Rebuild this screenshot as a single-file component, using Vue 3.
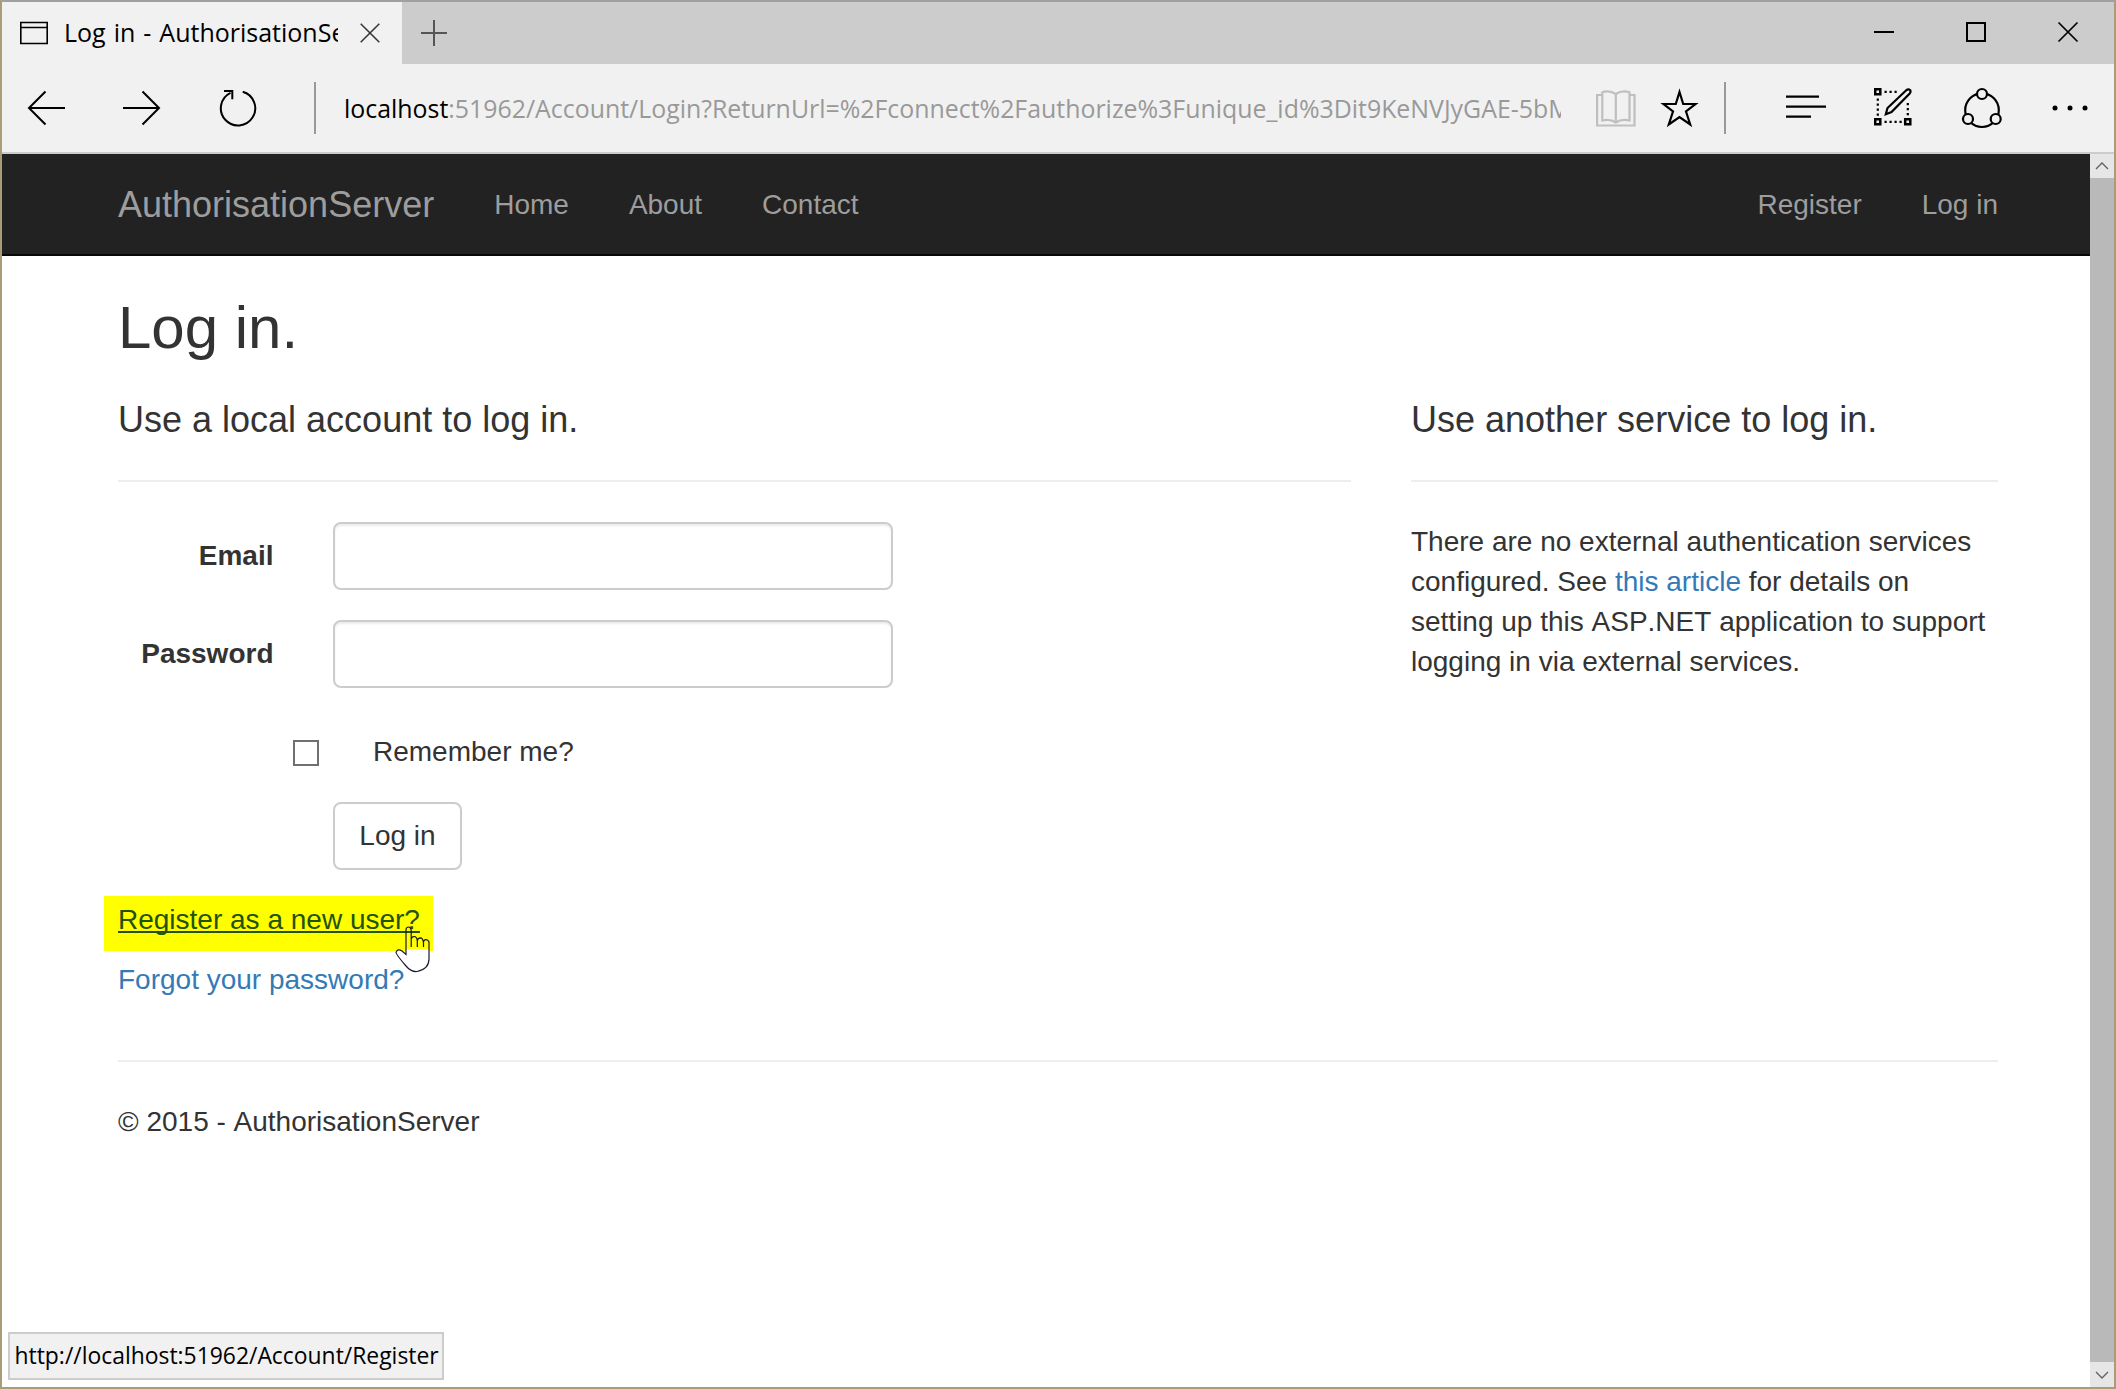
<script setup>
const navLinks = ['Home', 'About', 'Contact']
const accountLinks = ['Register', 'Log in']
const fields = [
  { id: 'email', label: 'Email', type: 'email' },
  { id: 'password', label: 'Password', type: 'password' },
]
</script>

<template>
  <div class="window">
    <header class="tabbar">
      <div class="tab">
        <svg class="page-icon" width="28" height="24" viewBox="0 0 28 24" fill="none" stroke="#000" stroke-width="1.6">
          <path d="M.8 1.5H27.2V22.5H.8ZM.8 6.500H27.2" />
        </svg>
        <span class="tab-title">Log in - AuthorisationServer</span>
        <svg class="tab-close" width="20" height="20" viewBox="0 0 20 20" fill="none" stroke="#333" stroke-width="1.5">
          <path d="M.7 .7 19.3 19.3M19.3 .7.7 19.3" />
        </svg>
      </div>
      <svg class="new-tab" width="26" height="26" viewBox="0 0 26 26" fill="none" stroke="#555" stroke-width="2">
        <path d="M13 0V26M0 13H26" />
      </svg>
      <div class="caption">
        <svg width="92" height="62" viewBox="0 0 92 62" fill="none" stroke="#000" stroke-width="2">
          <path d="M36 30H56" />
        </svg>
        <svg width="92" height="62" viewBox="0 0 92 62" fill="none" stroke="#000" stroke-width="2">
          <path d="M37 21H55V39H37Z" />
        </svg>
        <svg width="92" height="62" viewBox="0 0 92 62" fill="none" stroke="#000" stroke-width="1.7">
          <path d="M36.500 20.500 55.500 39.500M55.500 20.500 36.500 39.500" />
        </svg>
      </div>
    </header>

    <div class="toolbar">
      <svg class="back" width="40" height="40" viewBox="0 0 40 40" fill="none" stroke="#000" stroke-width="2">
        <path d="M38 20H2M18.500 3.500 2 20 18.500 36.500" />
      </svg>
      <svg class="forward" width="40" height="40" viewBox="0 0 40 40" fill="none" stroke="#000" stroke-width="2">
        <path d="M1 20H37M20.500 3.500 37 20 20.500 36.500" />
      </svg>
      <svg class="reload" width="40" height="40" viewBox="0 0 40 40" fill="none" stroke="#000" stroke-width="2">
        <path d="M24.700 3.700A17.200 17.200 0 1 1 12.500 4.800M6 3H14.300V11.200" />
      </svg>
      <i class="divider"></i>
      <div class="address"><b>localhost</b>:51962/Account/Login?ReturnUrl=%2Fconnect%2Fauthorize%3Funique_id%3Dit9KeNVJyGAE-5bM</div>
      <svg class="book" width="40" height="40" viewBox="0 0 40 40" fill="none" stroke="#bfbfbf" stroke-width="2.200">
        <path d="M6 7H1.100V37.500H38.500V7H33M19.800 6Q13 2 6.300 4.200V32.500Q14 30.500 19.800 34.500Q26 30.500 33.500 32.500V4.200Q26 2 19.800 6ZM19.800 6V34" />
      </svg>
      <svg class="star" width="40" height="44" viewBox="0 0 40 44" fill="none" stroke="#000" stroke-width="2.200">
        <path d="M19.500 6 23.200 18H35.500L26 25.500 30.200 38.500 19.500 31 8.800 38.500 13 25.500 3.500 18H15.800Z" />
      </svg>
      <i class="divider second"></i>
      <svg class="hub" width="40" height="26" viewBox="0 0 40 26" fill="none" stroke="#000" stroke-width="2.300">
        <path d="M0 1.600H33M0 11.600H40M0 21.600H25" />
      </svg>
      <svg class="note" width="40" height="40" viewBox="0 0 40 40" fill="none" stroke="#000" stroke-width="2.500">
        <path d="M1.200 1.200H6.300V6.300H1.200ZM1.200 31.200H6.300V36.300H1.200ZM31.200 31.200H36.300V36.300H31.200Z" />
        <path stroke-width="2.200" stroke-dasharray="2.200 2.800" d="M10.500 3.800H23M3.800 10.500V28M10.500 33.800H28M33.800 15V28" />
        <path stroke-width="2.200" d="M11.800 26.200 13.500 20 32.500 2Q34.500 .6 36 2Q37.200 3.600 35.700 5.500L17.500 24Z" />
      </svg>
      <svg class="share" width="42" height="44" viewBox="0 0 42 44" fill="#f1f1f1" stroke="#000" stroke-width="2.200">
        <circle cx="21" cy="24.200" r="16.800" />
        <circle cx="21" cy="8" r="5" /><circle cx="7" cy="33" r="5" /><circle cx="34.700" cy="33" r="5" />
      </svg>
      <svg class="more" width="36" height="6" viewBox="0 0 36 6">
        <circle cx="3" cy="3" r="2.500" /><circle cx="18" cy="3" r="2.500" /><circle cx="33" cy="3" r="2.500" />
      </svg>
    </div>

    <div class="viewport">
      <div class="page">
        <nav class="navbar">
          <a class="brand">AuthorisationServer</a>
          <a v-for="l in navLinks" :key="l">{{ l }}</a>
          <span class="spacer"></span>
          <a v-for="l in accountLinks" :key="l">{{ l }}</a>
        </nav>
        <main>
          <h2>Log in.</h2>
          <div class="columns">
            <section class="local">
              <h4>Use a local account to log in.</h4>
              <hr />
              <form @submit.prevent>
                <div v-for="f in fields" :key="f.id" class="row">
                  <label :for="f.id">{{ f.label }}</label>
                  <input :id="f.id" class="control" :type="f.type" />
                </div>
                <label class="remember"><span class="check"></span><span>Remember me?</span></label>
                <button type="submit">Log in</button>
              </form>
              <p class="register"><a>Register as a new user?</a>
                <svg class="cursor" width="36" height="48" viewBox="0 0 36 48" fill="#fff" stroke="#1c1830" stroke-width="1.2">
                  <path stroke="none" d="M11 23.500V28.500L7 25Q3 22.500 1 26L11 39.500Q16 46 23 45Q34 42 34 33V23.500Z" />
                  <path fill="none" d="M16.200 21V4Q15.500 1 13.600 1Q11 1 11 4V28.500L7 25Q2.500 22 1 26.500Q1.500 29 11 40Q16 46 22 45.500Q34 43 34 33V16Q33 13.200 30.500 13.600Q28.500 14.200 28.500 16V21M28.500 17Q28 11.800 25.500 11.800Q22.500 12 22.300 15V21M22.300 15Q22 10.500 19 10.500Q16.500 10.800 16.200 13.500" />
                </svg>
              </p>
              <p class="forgot"><a>Forgot your password?</a></p>
            </section>
            <section class="external">
              <h4>Use another service to log in.</h4>
              <hr />
              <p>There are no external authentication services configured. See <a>this article</a> for details on setting up this ASP.NET application to support logging in via external services.</p>
            </section>
          </div>
          <hr />
          <footer>© 2015 - AuthorisationServer</footer>
        </main>
        <div class="status">http://localhost:51962/Account/Register</div>
      </div>
      <div class="scrollbar">
        <svg width="24" height="24" viewBox="0 0 24 24" fill="none" stroke="#606060" stroke-width="1.300"><path d="M6 15 12 9 18 15" /></svg>
        <div class="thumb"></div>
        <svg width="24" height="25" viewBox="0 0 24 25" fill="none" stroke="#606060" stroke-width="1.300"><path d="M6 10 12 16 18 10" /></svg>
      </div>
    </div>
  </div>
</template>

<style>
body { margin: 0; }
</style>

<style scoped>
* { box-sizing: border-box; }
svg { display: block; flex: none; }
.window {
  width: 2116px; height: 1389px; display: flex; flex-direction: column; overflow: hidden;
  border: 2px solid #a99d78; border-top-color: #a0a0a0; background: #fff;
  font-family: "Liberation Sans", Arial, sans-serif; font-size: 28px; line-height: 40px; color: #333;
  font-kerning: none;
}
.tabbar { height: 62px; flex: none; display: flex; align-items: center; background: #ccc; }
.tab { width: 400px; height: 62px; padding-left: 18px; display: flex; align-items: center; background: #f1f1f1; }
.tab-title {
  width: 274px; margin: -3px 0 0 16px; overflow: hidden; white-space: nowrap; color: #000;
  font: 25px/36px "Open Sans", "Noto Sans", sans-serif; word-spacing: 1.5px;
}
.tab-close { margin-left: 22px; }
.new-tab { margin-left: 19px; }
.caption { margin-left: auto; display: flex; }
.toolbar { height: 90px; flex: none; display: flex; align-items: center; background: #f1f1f1; border-bottom: 2px solid #ccc; }
.back { margin-left: 25px; }
.forward { margin-left: 55px; }
.reload { margin-left: 56px; }
.divider { width: 2px; height: 52px; margin-left: 56px; background: #999; }
.address {
  width: 1217px; margin-left: 28px; overflow: hidden; white-space: nowrap; color: #999;
  font: 24.9px/40px "Open Sans", "Noto Sans", sans-serif;
}
.address b { font-weight: 400; color: #000; }
.book { margin-left: 35px; }
.star { margin-left: 24px; }
.divider.second { margin-left: 24px; }
.hub { margin-left: 60px; }
.note { margin-left: 48px; }
.share { margin-left: 47px; }
.more { margin-left: 49px; }
.viewport { flex: 1; min-height: 0; display: flex; }
.page { width: 2088px; position: relative; }
.navbar {
  height: 102px; padding: 2px 92px 0 116px; display: flex; align-items: center; gap: 60px;
  background: #222; border-bottom: 2px solid #080808; color: #9d9d9d;
}
.brand { font-size: 36px; }
.spacer { flex: 1; }
main { padding: 39px 92px 0 116px; }
h2 { margin: 0; font-size: 60px; line-height: 66px; font-weight: 400; }
h4 { margin: 0; font-size: 36px; line-height: 40px; font-weight: 400; }
hr { height: 2px; margin: 0; border: 0; background: #eee; }
.columns { display: flex; gap: 60px; margin-top: 39px; height: 660px; }
.local { width: 1233px; }
.external { width: 587px; }
.columns hr { margin-top: 40px; }
form { padding-top: 40px; }
.row { display: flex; align-items: center; height: 68px; margin-bottom: 30px; }
.row label { width: 155.5px; text-align: right; font-weight: 700; }
.control {
  width: 560px; height: 68px; margin-left: 59.5px; border: 2px solid #ccc; border-radius: 8px;
  background: #fff; box-shadow: inset 0 2px 2px rgba(0, 0, 0, .075); outline: 0;
}
.remember { display: flex; align-items: center; height: 40px; margin: 44px 0 30px 175px; gap: 54px; }
.check { width: 26px; height: 26px; margin-top: 2px; border: 2px solid #707070; }
button {
  display: block; width: 129px; height: 68px; margin-left: 215px; padding: 0; border: 2px solid #ccc;
  border-radius: 8px; background: #fff; font: inherit; font-kerning: none; color: #333;
}
p { margin: 0; }
a { color: #337ab7; }
.navbar a { color: inherit; }
.register {
  position: relative; width: 329px; height: 55px; margin: 26px 0 0 -14px; padding: 4px 14px; background: #ff0; white-space: nowrap;
}
.register a { color: #23520c; text-decoration: underline; text-decoration-thickness: 2px; text-underline-offset: 2px; text-decoration-skip-ink: none; }
.cursor { position: absolute; left: 291px; top: 30px; }
.forgot { margin-top: 9px; }
.external p { margin-top: 40px; }
footer { margin-top: 40px; }
.status {
  position: absolute; left: 6px; bottom: 7px; width: 436px; height: 48px; padding-left: 4.5px; white-space: nowrap;
  border: 2px solid #ccc; background: #f1f1f1; color: #000; font: 22.9px/43px "Open Sans", "Noto Sans", sans-serif;
}
.scrollbar { width: 24px; display: flex; flex-direction: column; background: #e6e6e6; }
.thumb { flex: 1; background: #b9b9b9; }
</style>
